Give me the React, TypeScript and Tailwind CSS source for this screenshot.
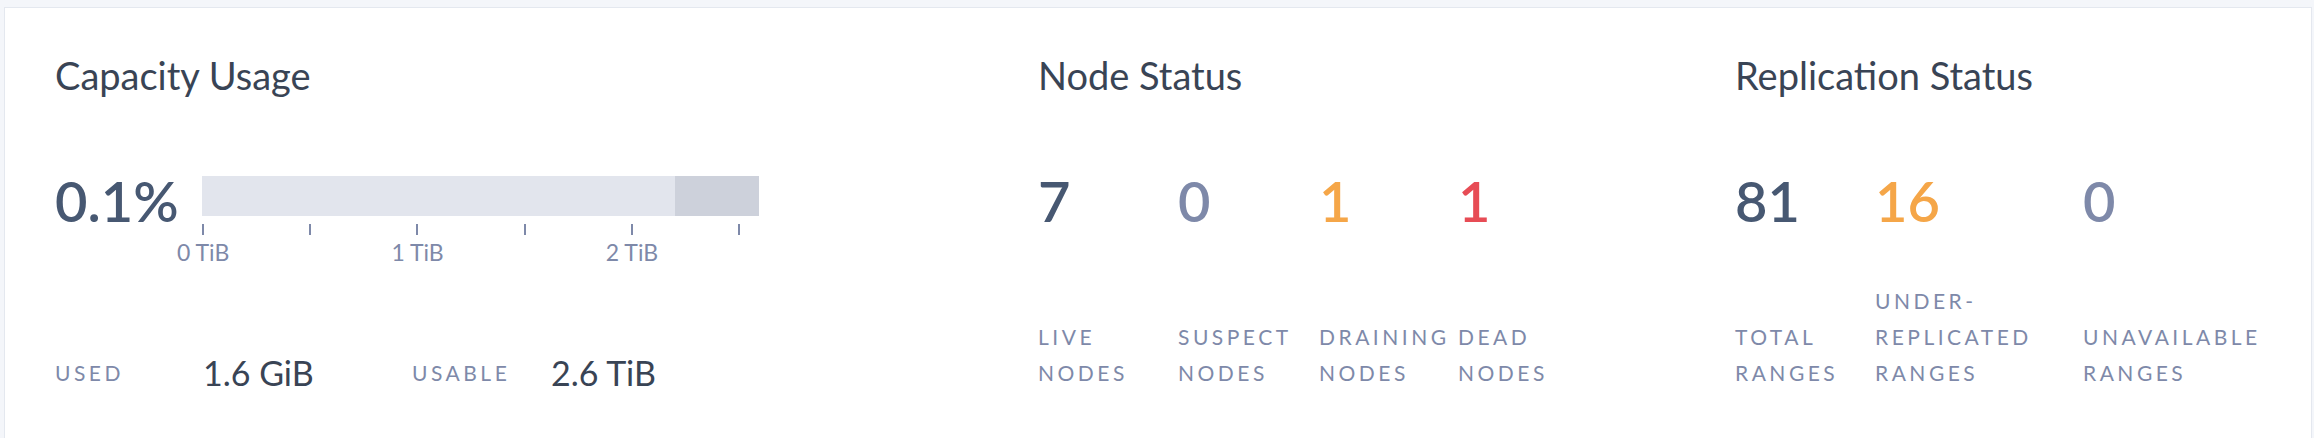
import React from "react";

const label =
  "text-[21px] leading-[36px] tracking-[3.5px] text-[#7e89a9] whitespace-nowrap";

type StatProps = {
  value: string;
  color: string;
  lines: string[];
  width: string;
};

function Stat({ value, color, lines, width }: StatProps) {
  return (
    <div className={`flex flex-col justify-between h-[224px] ${width}`}>
      <div className={`text-[56px] leading-[67px] font-semibold ${color}`}>{value}</div>
      <div className={label}>
        {lines.map((l) => (
          <div key={l}>{l}</div>
        ))}
      </div>
    </div>
  );
}

export default function App() {
  return (
    <div className="w-[2314px] h-[438px] overflow-hidden bg-[#f4f6fa] pt-[7px] pl-[4px] pr-[2px] font-['Lato',sans-serif]">
      <div className="h-[460px] bg-white border border-[#e4e8ef] flex pl-[50px] pt-[44px]">
        {/* Capacity Usage */}
        <div className="w-[983px] flex flex-col">
          <div className="text-[38px] leading-[46px] text-[#394455]">Capacity Usage</div>
          <div className="mt-[69px] flex items-start">
            <div className="w-[147px] text-[56px] leading-[67px] font-semibold text-[#475872]">0.1%</div>
            <div className="flex flex-col">
              <div className="mt-[9px] w-[557px] h-[40px] flex">
                <div className="w-[473px] bg-[#e2e5ed]" />
                <div className="flex-1 bg-[#cdd1db]" />
              </div>
              <div className="mt-[8px] w-[538px] h-[11px] flex justify-between">
                {[0, 1, 2, 3, 4, 5].map((i) => (
                  <div key={i} className="w-[2px] h-[11px] bg-[#7e89a9]" />
                ))}
              </div>
              <div className="mt-[4px] -ml-[106px] flex text-[23px] leading-[26px] text-[#7e89a9]">
                {["0 TiB", "1 TiB", "2 TiB"].map((t) => (
                  <div key={t} className="w-[214.4px] text-center">
                    {t}
                  </div>
                ))}
              </div>
            </div>
          </div>
          <div className="mt-[88px] h-[40px] flex items-center">
            <div className="w-[148px] text-[21px] leading-[26px] tracking-[3.5px] text-[#7e89a9]">USED</div>
            <div className="w-[209px] text-[34px] leading-[40px] text-[#394455]">1.6 GiB</div>
            <div className="w-[139px] text-[21px] leading-[26px] tracking-[3.5px] text-[#7e89a9]">USABLE</div>
            <div className="text-[34px] leading-[40px] text-[#394455]">2.6 TiB</div>
          </div>
        </div>

        {/* Node Status */}
        <div className="w-[697px] flex flex-col">
          <div className="text-[38px] leading-[46px] text-[#394455]">Node Status</div>
          <div className="mt-[69px] flex">
            <Stat value="7" color="text-[#475872]" lines={["LIVE", "NODES"]} width="w-[140px]" />
            <Stat value="0" color="text-[#7e89a9]" lines={["SUSPECT", "NODES"]} width="w-[141px]" />
            <Stat value="1" color="text-[#f5a648]" lines={["DRAINING", "NODES"]} width="w-[139px]" />
            <Stat value="1" color="text-[#e74c55]" lines={["DEAD", "NODES"]} width="w-[140px]" />
          </div>
        </div>

        {/* Replication Status */}
        <div className="flex-1 flex flex-col">
          <div className="text-[38px] leading-[46px] text-[#394455]">Replication Status</div>
          <div className="mt-[69px] flex">
            <Stat value="81" color="text-[#475872]" lines={["TOTAL", "RANGES"]} width="w-[140px]" />
            <Stat
              value="16"
              color="text-[#f5a648]"
              lines={["UNDER-", "REPLICATED", "RANGES"]}
              width="w-[208px]"
            />
            <Stat value="0" color="text-[#7e89a9]" lines={["UNAVAILABLE", "RANGES"]} width="w-[180px]" />
          </div>
        </div>
      </div>
    </div>
  );
}
